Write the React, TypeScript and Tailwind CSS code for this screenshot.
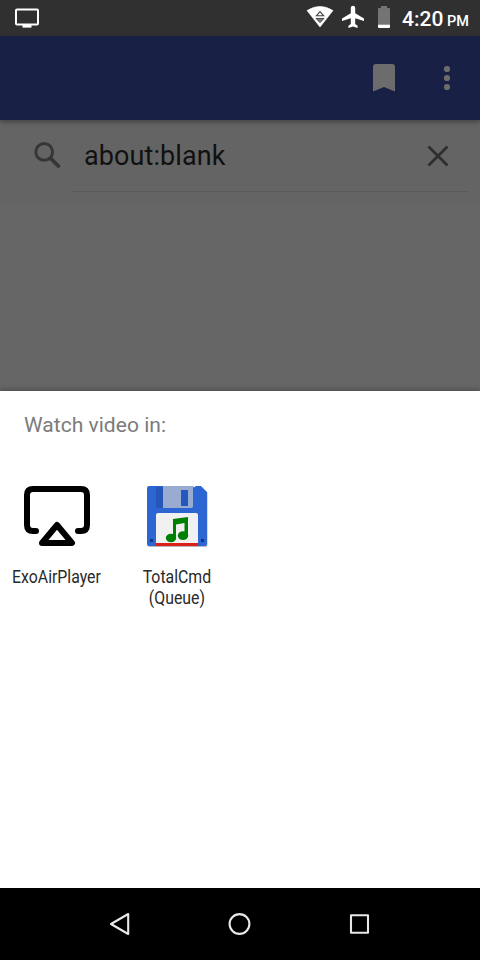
import React from "react";

function StatusBar() {
  return (
    <header className="flex h-9 shrink-0 items-center bg-[#303030] pl-[14px] pr-[11px] text-white">
      <svg className="h-5 w-[26px]" viewBox="14 8 26 20" fill="none">
        <rect x="16" y="9.4" width="22" height="15" rx="1" stroke="#fff" strokeWidth="2" />
        <path d="M22.5 25h9v2.6h-9z" fill="#fff" />
      </svg>
      <div className="flex-1" />
      <svg className="mr-[11px] h-9 w-[86px] shrink-0" viewBox="305 0 86 36" fill="none">
        <path d="M307 10.6Q320 2.2 333 10.6L320 27Z" fill="#fff" stroke="#fff" strokeWidth=".6" strokeLinejoin="round" />
        <path d="M316.3 15.8L320 11.6L323.7 15.8Z" stroke="#444" strokeWidth="1.1" />
        <path d="M316 18.4H324L320 22.6Z" fill="#777" stroke="#444" strokeWidth="1" />
        <path d="M364 21v-2.4l-8.8-5.4V8a2.2 2.2 0 0 0-4.4 0v5.2L342 18.6V21l8.8-2.7v5.6l-2.4 1.8v2.2l4.6-1.3 4.6 1.3v-2.2l-2.4-1.8v-5.6z" fill="#fff" />
        <path d="M381 6h6v2h2q1 0 1 1v15h-12V9q0-1 1-1h2z" fill="#747474" />
        <path d="M378 24.5h12V27q0 1-1 1h-10q-1 0-1-1z" fill="#fff" />
      </svg>
      <div className="flex w-[67px] items-baseline justify-between pt-[5px] font-medium">
        <span className="text-[21px] leading-9">4:20</span>
        <span className="text-[14.5px] leading-9">PM</span>
      </div>
    </header>
  );
}

function Toolbar() {
  return (
    <div className="z-10 flex h-[84px] shrink-0 items-center justify-end bg-[#192045] pr-[27px] shadow-[0_2px_5px_rgba(0,0,0,0.35)]">
      <svg className="h-9 w-20" viewBox="373 60 80 36" fill="#6c6c6c">
        <path d="M376 64h16q3 0 3 3v24.5l-11-4.5-11 4.5V67q0-3 3-3z" />
        <circle cx="447" cy="69" r="3.1" />
        <circle cx="447" cy="78" r="3.1" />
        <circle cx="447" cy="87" r="3.1" />
      </svg>
    </div>
  );
}

function SearchRow() {
  return (
    <div className="flex h-[85px] shrink-0 flex-col bg-[#646464]">
      <div className="flex h-[71px] items-center pl-[33px] pr-[30px]">
        <svg className="h-8 w-8" viewBox="33 140 32 32" fill="none" stroke="#363636">
          <circle cx="44.2" cy="151.9" r="8.4" strokeWidth="3" />
          <path d="M50.2 157.9L59.5 167.2" strokeWidth="3.7" />
        </svg>
        <span className="ml-[19px] flex-1 text-[27px] leading-[36px] tracking-[0.1px] text-[#111]">about:blank</span>
        <svg className="h-6 w-6" viewBox="426 144 24 24" stroke="#2e2e2e" strokeWidth="2.8">
          <path d="M428.5 146.5L447.5 165.5M447.5 146.5L428.5 165.5" />
        </svg>
      </div>
      <div className="ml-[72px] mr-3 h-px bg-[#5a5a5a]" />
    </div>
  );
}

function AirPlayIcon() {
  return (
    <svg className="h-[72px] w-[72px]" viewBox="21 480 72 72" fill="none" stroke="#000" strokeWidth="6" strokeLinecap="round" strokeLinejoin="round">
      <path d="M36 531h-3q-6 0-6-6v-30q0-6 6-6h48q6 0 6 6v30q0 6-6 6h-3" />
      <path d="M57 525L72 543H42Z" />
    </svg>
  );
}

function FloppyIcon() {
  return (
    <svg className="h-[72px] w-[72px]" viewBox="141 480 72 72">
      <path d="M147.5 492h60v53q0 2-2 2h-56q-2 0-2-2z" fill="#b8b8b8" />
      <path d="M149 486h44l1 1.5 2-1.5h5l6 6v52q0 2-2 2h-56q-2 0-2-2v-56q0-2 2-2z" fill="#2d66d2" />
      <path d="M156 487h7v21h-5q-2 0-2-2z" fill="#2557b9" />
      <path d="M163 486h30v20q0 2-2 2h-28z" fill="#99abd1" />
      <path d="M181 490h7v16h-7z" fill="#2458bc" />
      <path d="M158 513h38q2 0 2 2v28h-42v-28q0-2 2-2z" fill="#f1f1f1" />
      <path d="M156 543h42v3h-42z" fill="#db2016" />
      <path d="M150 539h3v3h-3zM201 539h3v3h-3z" fill="#123780" />
      <g fill="#008000">
        <ellipse cx="171" cy="538" rx="5.2" ry="4.2" />
        <ellipse cx="183" cy="535.6" rx="5.2" ry="4.4" />
        <path d="M173 519l15-2v18.5h-3.5V523l-8.5 1.5V538h-3z" />
      </g>
    </svg>
  );
}

function AppTarget({ icon, lines }: { icon: React.ReactNode; lines: string[] }) {
  return (
    <div className="flex w-[120px] flex-col items-center">
      {icon}
      <div className="mt-[14px] flex flex-col items-center pr-px text-[18px] leading-[21px] text-[#292929]">
        {lines.map((line) => (
          <span key={line} className="origin-center scale-x-[0.88] whitespace-nowrap">
            {line}
          </span>
        ))}
      </div>
    </div>
  );
}

function NavigationBar() {
  return (
    <nav className="flex h-[72px] shrink-0 justify-center bg-black">
      <svg className="h-[72px] w-[270px]" viewBox="105 888 270 72" fill="none" stroke="#e8e8e8" strokeWidth="2.1" strokeLinejoin="round">
        <path d="M128.2 914V934L111 924Z" />
        <circle cx="239.5" cy="924" r="9.9" />
        <rect x="351" y="915.2" width="17" height="17.6" />
      </svg>
    </nav>
  );
}

export default function App() {
  return (
    <main className="flex h-[960px] w-[480px] flex-col overflow-hidden bg-[#666] font-[Roboto,sans-serif]">
      <StatusBar />
      <Toolbar />
      <SearchRow />
      <div className="flex-1" />
      <section className="h-[497px] shrink-0 bg-white shadow-[0_0_6px_rgba(0,0,0,0.4)]">
        <h1 className="h-[89px] pl-6 pt-[20px] text-[21px] leading-[28px] tracking-[0.03px] text-[#7b7b7b]">Watch video in:</h1>
        <div className="-ml-[3px] flex">
          <AppTarget icon={<AirPlayIcon />} lines={["ExoAirPlayer"]} />
          <AppTarget icon={<FloppyIcon />} lines={["TotalCmd", "(Queue)"]} />
        </div>
      </section>
      <NavigationBar />
    </main>
  );
}
